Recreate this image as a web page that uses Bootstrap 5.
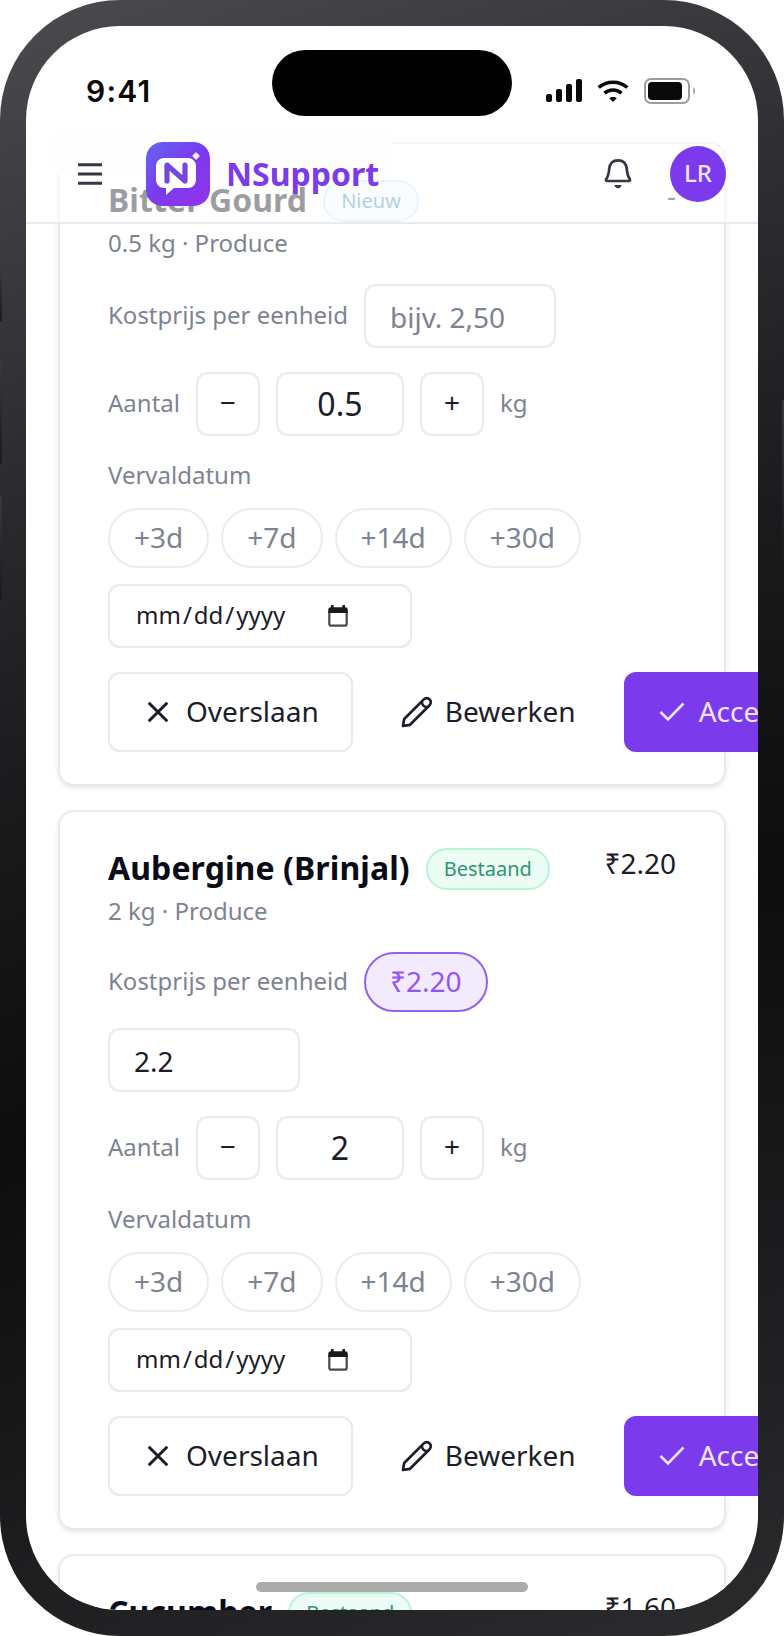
<!DOCTYPE html>
<html lang="nl">
<head>
    <meta charset="UTF-8">
    <meta name="viewport" content="width=device-width, initial-scale=1.0">
    <title>NSupport</title>
    <link rel="stylesheet" href="https://cdn.jsdelivr.net/npm/bootstrap@5.3.0/dist/css/bootstrap.min.css">
    <style>
        body { font-family: "Noto Sans", sans-serif; font-size: 28px; line-height: 40px; color: #1b1d29; background: #fff; overflow: hidden; }
        svg { flex-shrink: 0; display: block; }

        /* device */
        .phone { width: 784px; height: 1636px; padding: 26px; border-radius: 120px; background: linear-gradient(160deg, #4a4a4f 0%, #2c2c30 25%, #1c1c1e 40%, #0d0d0d 60%, #1c1c1e 80%, #2c2c2e 100%); }
        .side-key { left: 0; width: 2px; border-radius: 0 2px 2px 0; background: linear-gradient(#3a3a3c, #1a1a1c); }
        .key-a { top: 267px; height: 55px; }
        .key-b { top: 360px; height: 104px; }
        .key-c { top: 496px; height: 104px; }
        .key-d { top: 400px; height: 164px; left: auto; right: 0; border-radius: 2px 0 0 2px; }
        .screen { width: 732px; height: 1584px; border-radius: 94px; background: #fff; overflow: hidden; }
        .status { top: 0; left: 0; right: 0; height: 100px; z-index: 5; }
        .clock { left: 60px; top: 47px; font: 600 30px/36px Inter, sans-serif; letter-spacing: 1.2px; color: #0a0a0a; }
        .island { left: 246px; top: 24px; width: 240px; height: 66px; border-radius: 33px; background: #000; }
        .signals { left: 520px; top: 50px; }
        .home-bar { left: 230px; top: 1556px; width: 272px; height: 10px; border-radius: 5px; background: #ababab; z-index: 5; }

        /* app header, lies over the scrolled list */
        .app-header { top: 100px; left: 0; right: 0; height: 98px; padding: 0 32px 0 44px; background: rgba(255, 255, 255, .6); border-bottom: 2px solid #e9e9ef; z-index: 3; }
        .header-veil { top: 6px; left: 26px; width: 340px; height: 42px; background: #fefefe; }
        .brand-logo { margin-left: 36px; border-radius: 16px; box-shadow: 0 2px 4px rgba(0, 0, 0, .08); }
        .brand-name { margin-left: 16px; font-size: 32px; font-weight: 700; color: #7c3aed; }
        .avatar { width: 56px; height: 56px; margin-left: 32px; border-radius: 50%; background: #7c3aed; color: #eee5fd; font-size: 24px; line-height: 32px; font-weight: 500; padding-bottom: 2px; }

        /* list of scanned products */
        .list { padding: 116px 32px 0; gap: 24px; }
        .item { border: 2px solid #e9e9ef; border-radius: 16px; padding: 32px 48px; background: #fff; box-shadow: 0 2px 4px rgba(0, 0, 0, .1); }
        .item-title { font-size: 32px; line-height: 48px; font-weight: 700; letter-spacing: .08px; color: #090b17; }
        .item-price { height: 40px; line-height: 38px; }
        .muted-text { height: 32px; font-size: 24px; line-height: 30px; color: #7e8391; }
        .sub { margin-top: 4px; }
        .tag { height: 42px; margin-top: 2px; padding: 0 16px; border: 2px solid #b6f5d6; border-radius: 21px; background: #ecfdf5; color: #2f9473; font-size: 20px; line-height: 37px; }
        .tag-new { border-color: #c3e6fb; background: #f0f9ff; color: #3f8dbd; }
        .block { margin-top: 24px; }
        .gap-16 { gap: 16px; }
        .gap-12 { gap: 12px; }
        .pill { height: 60px; padding: 0 24px; border: 2px solid #ebecf1; border-radius: 30px; line-height: 54px; color: #7e8391; background: #fff; }
        .pill-on { border-color: #9560f0; background: #f2ebfe; color: #9155f2; }
        .field { height: 64px; border: 2px solid #e9e9ef; border-radius: 12px; line-height: 60px; }
        .cost { width: 192px; padding: 1px 24px 0; }
        .cost-empty { color: #7e8391; }
        .step { width: 64px; font-size: 28px; line-height: 57px; text-align: center; }
        .qty { width: 128px; font-size: 32px; text-align: center; }
        .date { width: 304px; padding: 0 26px 3px; font-size: 24px; }
        .date i { font-style: normal; margin: 0 2px; }
        .date-icon { margin: 2px 0 0 43px; }
        .act { height: 80px; padding: 0 32px; border: 2px solid transparent; border-radius: 12px; gap: 12px; white-space: nowrap; }
        .act span { margin-top: -2px; }
        .act-skip { border-color: #e9e9ef; }
        .act-edit { border-width: 2px 0; }
        .act-ok { padding-left: 30px; background: #7c3aed; color: #eee5fd; gap: 11px; }
    </style>
</head>
<body>
    <svg width="0" height="0" class="position-absolute">
        <defs>
            <symbol id="i-x" viewBox="0 0 32 32"><path d="M6.700 6.700 25.300 25.300M25.300 6.700 6.700 25.300" fill="none" stroke="#1b1d29" stroke-width="3"/></symbol>
            <symbol id="i-pencil" viewBox="0 0 32 32"><path d="M2 29.800 3.200 23 22.800 3.400a4.100 4.100 0 0 1 5.800 5.800L9 28.800ZM20.800 5.400c0 3.500 2.300 5.800 5.800 5.800" fill="none" stroke="#1b1d29" stroke-width="2.700" stroke-linejoin="round"/></symbol>
            <symbol id="i-check" viewBox="0 0 32 32"><path d="M4.500 16 12 23.500 27.500 7.500" fill="none" stroke="#eee5fd" stroke-width="2.600"/></symbol>
            <symbol id="i-cal" viewBox="0 0 20 22"><path d="M1.300 6v12.700a2 2 0 0 0 2 2h13.400a2 2 0 0 0 2-2V6" fill="none" stroke="#4a4a4a" stroke-width="2.200"/><path d="M.300 4.500A2.300 2.300 0 0 1 2.600 2.200H3V0h2.600v2.200h8.800V0H17v2.200h.4a2.300 2.300 0 0 1 2.300 2.300V8H.300Z" fill="#1a1a1a"/></symbol>
        </defs>
    </svg>

    <div class="phone position-relative">
        <div class="side-key key-a position-absolute"></div>
        <div class="side-key key-b position-absolute"></div>
        <div class="side-key key-c position-absolute"></div>
        <div class="side-key key-d position-absolute"></div>

        <div class="screen position-relative">
            <div class="status position-absolute">
                <div class="clock position-absolute">9:41</div>
                <div class="island position-absolute"></div>
                <svg class="signals position-absolute" width="152" height="30" viewBox="0 0 152 30" fill="#0a0a0a">
                    <rect x="0" y="18" width="6" height="8" rx="2"/>
                    <rect x="10" y="13" width="6" height="13" rx="2"/>
                    <rect x="20" y="8" width="6" height="18" rx="2"/>
                    <rect x="30" y="3" width="6" height="23" rx="2"/>
                    <g fill="none" stroke="#0a0a0a" stroke-width="3.600">
                        <path d="M52.700 11.500c8-7.100 20.600-7.100 28.600 0"/>
                        <path d="M58.500 17.200c4.900-4.200 12.100-4.200 17 0"/>
                    </g>
                    <path d="M63.200 22.300c2.200-1.900 5.400-1.900 7.600 0L67 26Z"/>
                    <rect x="99" y="3" width="44" height="24" rx="6" fill="none" stroke="#9d9d9d" stroke-width="2"/>
                    <rect x="102" y="6" width="34" height="18" rx="4"/>
                    <path d="M147.300 11c2.300 1.500 2.300 6.500 0 8Z" fill="#9d9d9d"/>
                </svg>
            </div>

            <header class="app-header position-absolute d-flex align-items-center">
                <div class="header-veil position-absolute"></div>
                <svg class="position-relative" width="40" height="40" viewBox="0 0 40 40"><path d="M8 10.700h24M8 20h24M8 29.300h24" stroke="#353743" stroke-width="3"/></svg>
                <svg class="brand-logo position-relative" width="64" height="64" viewBox="0 0 64 64">
                    <defs><linearGradient id="brand" x1="0" y1="0" x2="1" y2="1"><stop offset="0" stop-color="#6366f1"/><stop offset=".5" stop-color="#7c3aed"/><stop offset="1" stop-color="#9333ea"/></linearGradient></defs>
                    <rect width="64" height="64" rx="16" fill="url(#brand)"/>
                    <path d="M18 16h24a8 8 0 0 1 8 8v14a8 8 0 0 1-8 8H28l-8 7v-7h-2a8 8 0 0 1-8-8V24a8 8 0 0 1 8-8Z" fill="#fff"/>
                    <path d="M21 39V23l18 16V23" fill="none" stroke="#7546e0" stroke-width="5.200" stroke-linecap="round" stroke-linejoin="round"/>
                    <path d="m50 11 3 3-3 3-3-3Z" fill="#fff" stroke="#fff" stroke-width="1.500" stroke-linejoin="round" stroke-opacity=".8"/>
                </svg>
                <div class="brand-name position-relative">NSupport</div>
                <svg class="ms-auto" width="40" height="40" viewBox="0 0 40 40" fill="none" stroke="#353743" stroke-width="2.700" stroke-linejoin="round">
                    <path d="M20 6.300c5.700 0 8.300 3.500 8.800 8.700.4 5 .8 7 2.900 9.900.8 1.200.2 2.100-.9 2.100H9.200c-1.100 0-1.700-.9-.9-2.100 2.100-2.900 2.500-4.900 2.900-9.900.5-5.200 3.100-8.700 8.800-8.700Z"/>
                    <path d="M16.400 31c.8 4.200 6.400 4.200 7.200 0Z" fill="#353743" stroke="none"/>
                </svg>
                <div class="avatar d-flex align-items-center justify-content-center">LR</div>
            </header>

            <main class="list d-flex flex-column">
                <article class="item">
                    <div class="d-flex justify-content-between">
                        <div class="d-flex align-items-center gap-16"><div class="item-title">Bitter Gourd</div><span class="tag tag-new">Nieuw</span></div>
                        <span class="item-price">-</span>
                    </div>
                    <div class="muted-text sub">0.5 kg · Produce</div>
                    <div class="block d-flex flex-wrap align-items-center gap-16">
                        <span class="muted-text">Kostprijs per eenheid</span>
                        <div class="field cost cost-empty">bijv. 2,50</div>
                    </div>
                    <div class="block d-flex align-items-center gap-16">
                        <span class="muted-text">Aantal</span>
                        <div class="field step">−</div><div class="field qty">0.5</div><div class="field step">+</div>
                        <span class="muted-text">kg</span>
                    </div>
                    <div class="block muted-text">Vervaldatum</div>
                    <div class="d-flex gap-12 mt-3"><span class="pill">+3d</span><span class="pill">+7d</span><span class="pill">+14d</span><span class="pill">+30d</span></div>
                    <div class="field date d-flex align-items-center mt-3"><span>mm<i>/</i>dd<i>/</i>yyyy</span><svg class="date-icon" width="20" height="22"><use href="#i-cal"/></svg></div>
                    <div class="block d-flex gap-16">
                        <div class="act act-skip d-flex align-items-center"><svg width="32" height="32"><use href="#i-x"/></svg><span>Overslaan</span></div>
                        <div class="act act-edit d-flex align-items-center"><svg width="32" height="32"><use href="#i-pencil"/></svg><span>Bewerken</span></div>
                        <div class="act act-ok d-flex align-items-center"><svg width="32" height="32"><use href="#i-check"/></svg><span>Accepteren</span></div>
                    </div>
                </article>

                <article class="item">
                    <div class="d-flex justify-content-between">
                        <div class="d-flex align-items-center gap-16"><div class="item-title">Aubergine (Brinjal)</div><span class="tag">Bestaand</span></div>
                        <span class="item-price">₹2.20</span>
                    </div>
                    <div class="muted-text sub">2 kg · Produce</div>
                    <div class="block d-flex flex-wrap align-items-center gap-16">
                        <span class="muted-text">Kostprijs per eenheid</span>
                        <span class="pill pill-on">₹2.20</span>
                        <div class="w-100 d-flex"><div class="field cost">2.2</div></div>
                    </div>
                    <div class="block d-flex align-items-center gap-16">
                        <span class="muted-text">Aantal</span>
                        <div class="field step">−</div><div class="field qty">2</div><div class="field step">+</div>
                        <span class="muted-text">kg</span>
                    </div>
                    <div class="block muted-text">Vervaldatum</div>
                    <div class="d-flex gap-12 mt-3"><span class="pill">+3d</span><span class="pill">+7d</span><span class="pill">+14d</span><span class="pill">+30d</span></div>
                    <div class="field date d-flex align-items-center mt-3"><span>mm<i>/</i>dd<i>/</i>yyyy</span><svg class="date-icon" width="20" height="22"><use href="#i-cal"/></svg></div>
                    <div class="block d-flex gap-16">
                        <div class="act act-skip d-flex align-items-center"><svg width="32" height="32"><use href="#i-x"/></svg><span>Overslaan</span></div>
                        <div class="act act-edit d-flex align-items-center"><svg width="32" height="32"><use href="#i-pencil"/></svg><span>Bewerken</span></div>
                        <div class="act act-ok d-flex align-items-center"><svg width="32" height="32"><use href="#i-check"/></svg><span>Accepteren</span></div>
                    </div>
                </article>

                <article class="item">
                    <div class="d-flex justify-content-between">
                        <div class="d-flex align-items-center gap-16"><div class="item-title">Cucumber</div><span class="tag">Bestaand</span></div>
                        <span class="item-price">₹1.60</span>
                    </div>
                </article>
            </main>

            <div class="home-bar position-absolute"></div>
        </div>
    </div>
    <script src="https://cdn.jsdelivr.net/npm/bootstrap@5.3.0/dist/js/bootstrap.bundle.min.js"></script>
</body>
</html>
